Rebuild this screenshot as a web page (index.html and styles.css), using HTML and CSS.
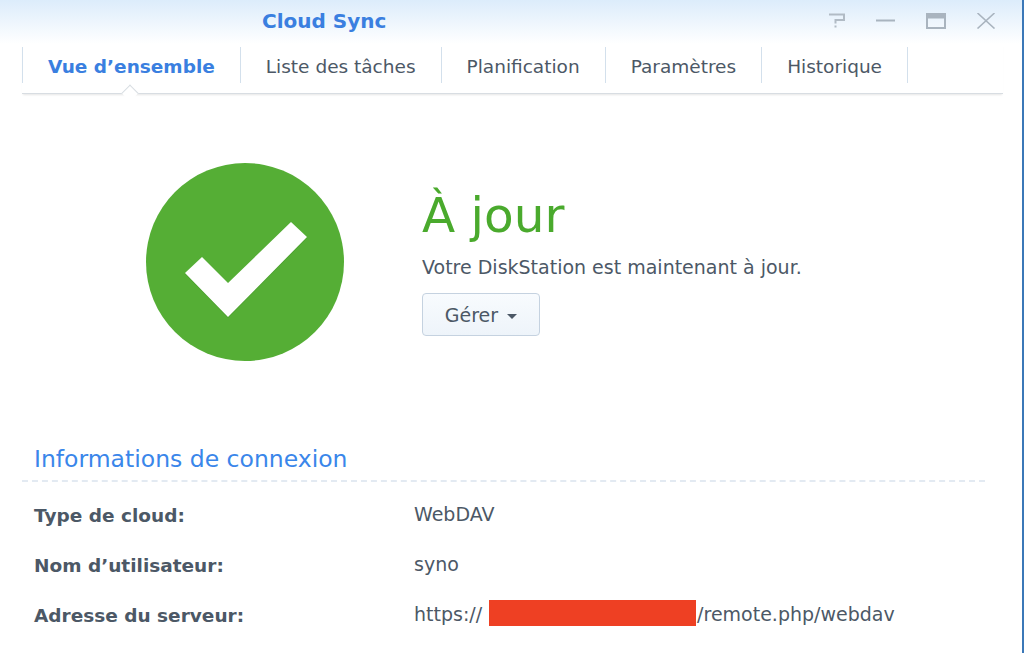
FILE: index.html
```html
<!DOCTYPE html>
<html lang="fr">
<head>
    <meta charset="UTF-8">
    <title>Cloud Sync</title>
    <link rel="stylesheet" href="styles.css">
</head>
<body>

<div class="window">
    <!-- Barre de titre -->
    <div class="title-bar">
        <span class="app-title">Cloud Sync</span>
        <div class="win-buttons">
            <svg class="win-icon" viewBox="0 0 20 16"><path d="M3 1.500H18V7H9.500V10.500M9.500 12.500V14.500" fill="none" stroke="#b1bbc5" stroke-width="2"/></svg>
            <svg class="win-icon" viewBox="0 0 20 16"><path d="M0 7.500H19" fill="none" stroke="#a9b4bf" stroke-width="2"/></svg>
            <svg class="win-icon" viewBox="0 0 20 16"><path d="M1 1H19V15H1Z" fill="none" stroke="#a9b4bf" stroke-width="2"/><path d="M1 3.500H19" stroke="#a9b4bf" stroke-width="4"/></svg>
            <svg class="win-icon" viewBox="0 0 20 16"><path d="M1.500 0L18.500 15.500M18.500 0L1.500 15.500" fill="none" stroke="#a9b4bf" stroke-width="1.600"/></svg>
        </div>
    </div>

    <!-- Onglets -->
    <div class="tabs">
        <div class="tab tab-active">Vue d’ensemble</div>
        <div class="tab">Liste des tâches</div>
        <div class="tab">Planification</div>
        <div class="tab">Paramètres</div>
        <div class="tab">Historique</div>
    </div>

    <!-- Statut -->
    <div class="status">
        <svg class="status-icon" viewBox="0 0 198 198">
            <circle cx="99" cy="99" r="99" fill="#55ae35"/>
            <path d="M39 110L56 94L82 120L145 59L161 74L82 154Z" fill="#3f8f28" transform="translate(0 1)" opacity="0.5"/>
            <path d="M39 110L56 94L82 120L145 59L161 74L82 154Z" fill="#fff"/>
        </svg>
        <div class="status-text">
            <h1 class="status-title">À jour</h1>
            <p class="status-desc">Votre DiskStation est maintenant à jour.</p>
            <button class="manage-btn">Gérer <span class="caret"></span></button>
        </div>
    </div>

    <!-- Informations -->
    <div class="info">
        <h2 class="info-title">Informations de connexion</h2>
        <div class="info-row">
            <span class="info-label">Type de cloud:</span>
            <span>WebDAV</span>
        </div>
        <div class="info-row">
            <span class="info-label">Nom d’utilisateur:</span>
            <span>syno</span>
        </div>
        <div class="info-row">
            <span class="info-label">Adresse du serveur:</span>
            <span class="server">https://<span class="redacted"></span>/remote.php/webdav</span>
        </div>
    </div>
</div>

</body>
</html>
```

FILE: styles.css
```css
html, body {
    margin: 0;
    height: 100%;
}
body {
    font-family: 'DejaVu Sans', 'Liberation Sans', sans-serif;
    color: #4c5866;
    background: #fff;
    overflow: hidden;
}
.window {
    height: 653px;
    box-sizing: border-box;
    padding-right: 19px;
    border-right: 2px solid #3b78b8;
    background: #fff;
}
.title-bar {
    display: flex;
    justify-content: space-between;
    align-items: center;
    height: 44px;
    margin-right: -19px;
    padding: 0 26px 2px 262px;
    box-sizing: border-box;
    background: linear-gradient(#dcecfb, #ffffff);
}
.app-title {
    color: #3a7fe0;
    font-size: 20px;
    font-weight: bold;
}
.win-buttons {
    display: flex;
    gap: 30px;
}
.win-icon {
    width: 20px;
    height: 16px;
    display: block;
}
.tabs {
    display: flex;
    height: 50px;
    margin-left: 22px;
    padding: 3px 0 10px;
    box-sizing: border-box;
    border-bottom: 1px solid #d8dde2;
    box-shadow: 0 2px 2px -1px rgba(0,0,0,0.1);
    position: relative;
}
.tab {
    display: flex;
    align-items: center;
    padding: 2px 25px 0;
    font-size: 18.5px;
    border-right: 1px solid #d3e0ec;
}
.tabs::before {
    content: "";
    width: 1px;
    background: #d3e0ec;
}
.tab-active {
    color: #3a7fe0;
    font-weight: bold;
    position: relative;
}
.tab-active::after {
    content: "";
    position: absolute;
    left: 101px;
    bottom: -16px;
    width: 11px;
    height: 11px;
    background: #fff;
    border-left: 1px solid #d8dde2;
    border-top: 1px solid #d8dde2;
    transform: rotate(45deg);
}
.status {
    display: flex;
    margin-top: 69px;
    margin-left: 146px;
}
.status-icon {
    width: 198px;
    height: 198px;
    flex-shrink: 0;
}
.status-text {
    margin-left: 78px;
}
.status-title {
    margin: 21px 0 0;
    color: #4aaa2d;
    font-size: 48.5px;
    font-weight: normal;
    line-height: 62px;
}
.status-desc {
    margin: 9px 0 0;
    font-size: 19px;
    line-height: 24px;
}
.manage-btn {
    display: block;
    width: 118px;
    height: 43px;
    margin-top: 14px;
    padding: 0;
    font-family: inherit;
    font-size: 19px;
    color: #4c5866;
    border: 1px solid #c5d2e0;
    border-radius: 4px;
    background: linear-gradient(#f8fbfe, #eef4fa);
}
.caret {
    display: inline-block;
    margin-left: 3px;
    vertical-align: middle;
    border-top: 5px solid #4c5866;
    border-left: 5px solid transparent;
    border-right: 5px solid transparent;
}
.info {
    margin: 82px 18px 0 22px;
}
.info-title {
    margin: 0;
    padding: 0 12px 5px;
    color: #3a86ea;
    font-size: 23.5px;
    font-weight: normal;
    line-height: 32px;
    border-bottom: 2px dashed #e3eaf2;
}
.info-row {
    display: grid;
    grid-template-columns: 380px 1fr;
    padding-left: 12px;
    font-size: 19px;
    line-height: 24px;
    margin-top: 24px;
}
.info-row:first-of-type {
    margin-top: 20px;
}
.info-label {
    font-size: 18.5px;
    font-weight: bold;
    padding-top: 2px;
}
.server {
    display: flex;
}
.redacted {
    width: 207px;
    height: 26px;
    margin: -2px 1px 0 7px;
    background: #ee4023;
}
```
